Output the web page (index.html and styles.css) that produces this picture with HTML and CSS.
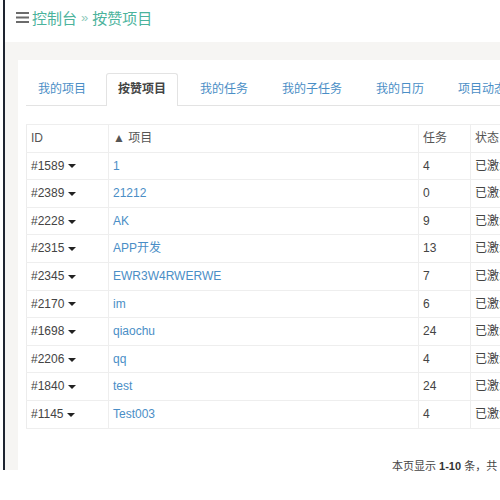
FILE: index.html
```html
<!DOCTYPE html>
<html>
<head>
<meta charset="utf-8">
<link rel="stylesheet" href="styles.css">
</head>
<body>
<div class="page">
  <header class="topbar">
    <svg class="menu-icon" width="13" height="11" viewBox="0 0 13 11"><rect x="0" y="0" width="13" height="2" fill="#6b6b6b"/><rect x="0" y="4.5" width="13" height="2" fill="#6b6b6b"/><rect x="0" y="9" width="13" height="2" fill="#6b6b6b"/></svg>
    <a class="crumb">控制台</a>
    <span class="sep">»</span>
    <a class="crumb">按赞项目</a>
  </header>
  <main class="content">
    <section class="card">
      <nav class="tabs">
        <a class="tab">我的项目</a>
        <a class="tab active">按赞项目</a>
        <a class="tab">我的任务</a>
        <a class="tab">我的子任务</a>
        <a class="tab">我的日历</a>
        <a class="tab">项目动态</a>
      </nav>
      <table class="grid">
        <colgroup>
          <col class="c-id"><col class="c-name"><col class="c-task"><col class="c-status">
        </colgroup>
        <thead>
          <tr><th>ID</th><th>▲ 项目</th><th>任务</th><th>状态</th></tr>
        </thead>
        <tbody>
          <tr><td>#1589<i class="caret"></i></td><td><a>1</a></td><td>4</td><td>已激活</td></tr>
          <tr><td>#2389<i class="caret"></i></td><td><a>21212</a></td><td>0</td><td>已激活</td></tr>
          <tr><td>#2228<i class="caret"></i></td><td><a>AK</a></td><td>9</td><td>已激活</td></tr>
          <tr><td>#2315<i class="caret"></i></td><td><a>APP开发</a></td><td>13</td><td>已激活</td></tr>
          <tr><td>#2345<i class="caret"></i></td><td><a>EWR3W4RWERWE</a></td><td>7</td><td>已激活</td></tr>
          <tr><td>#2170<i class="caret"></i></td><td><a>im</a></td><td>6</td><td>已激活</td></tr>
          <tr><td>#1698<i class="caret"></i></td><td><a>qiaochu</a></td><td>24</td><td>已激活</td></tr>
          <tr><td>#2206<i class="caret"></i></td><td><a>qq</a></td><td>4</td><td>已激活</td></tr>
          <tr><td>#1840<i class="caret"></i></td><td><a>test</a></td><td>24</td><td>已激活</td></tr>
          <tr><td>#1145<i class="caret"></i></td><td><a>Test003</a></td><td>4</td><td>已激活</td></tr>
        </tbody>
      </table>
      <p class="summary">本页显示 <b>1-10</b> 条，共 <b>24</b> 条。</p>
    </section>
  </main>
</div>
</body>
</html>
```

FILE: styles.css
```css
html, body {
  margin: 0;
  padding: 0;
  background: #fff;
  overflow: hidden;
  width: 500px;
  height: 500px;
}
body {
  font-family: "Liberation Sans", "Noto Sans CJK SC", Arial, sans-serif;
  font-size: 12px;
  color: #444;
}
.page {
  margin-left: 3px;
  border-left: 2px solid #1e2430;
  height: 470px;
  display: flex;
  flex-direction: column;
}
.topbar {
  height: 42px;
  flex: none;
  display: flex;
  align-items: center;
  padding-left: 11px;
  padding-bottom: 8px;
  box-sizing: border-box;
  font-size: 15px;
  background: #fff;
}
.menu-icon {
  margin-right: 3px;
  flex: none;
}
.crumb {
  color: #4bb39c;
}
.sep {
  color: #8fcbbd;
  margin: 0 4px;
  font-size: 13px;
}
.content {
  flex: 1;
  background: #f6f5f3;
  padding: 18px 0 0 13px;
  min-height: 0;
}
.card {
  background: #fff;
  height: 440px;
  padding: 13px 0 0 8px;
  box-sizing: border-box;
}
.tabs {
  display: flex;
  height: 32px;
  border-bottom: 1px solid #e3e3e3;
  box-sizing: content-box;
  white-space: nowrap;
}
.tab {
  padding: 0 11px;
  margin-right: 10px;
  line-height: 31px;
  color: #4a8ec6;
  font-size: 12px;
  border: 1px solid transparent;
  border-bottom: none;
  border-radius: 3px 3px 0 0;
  height: 32px;
  box-sizing: border-box;
}
.tab:first-child {
  margin-right: 8px;
}
.tab.active {
  color: #444;
  font-weight: bold;
  background: #fff;
  border-color: #e3e3e3;
  height: 33px;
  margin-bottom: -1px;
}
.grid {
  margin-top: 18px;
  border-collapse: collapse;
  table-layout: fixed;
  width: 520px;
  border-left: 1px solid #ececec;
}
.c-id { width: 82px; }
.c-name { width: 310px; }
.c-task { width: 52px; }
.c-status { width: 76px; }
.grid th, .grid td {
  text-align: left;
  font-weight: normal;
  padding: 5px 4px;
  line-height: 16.6px;
  border-bottom: 1px solid #eeeeee;
  border-right: 1px solid #eeeeee;
  white-space: nowrap;
  overflow: hidden;
}
.grid th {
  color: #555;
  border-top: 1px solid #eeeeee;
}
.grid td {
  color: #444;
}
.grid td a {
  color: #4a8ec6;
}
.caret {
  display: inline-block;
  width: 0;
  height: 0;
  margin-left: 4px;
  vertical-align: middle;
  border-left: 4px solid transparent;
  border-right: 4px solid transparent;
  border-top: 4px solid #222;
}
.summary {
  margin: 28px 0 0 366px;
  font-size: 11px;
  color: #444;
  white-space: nowrap;
}
.summary b {
  color: #333;
}
```
